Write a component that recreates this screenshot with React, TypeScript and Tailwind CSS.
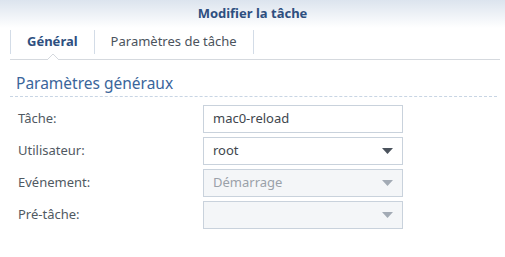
import React from "react";

interface Row {
  label: string;
  value: string;
  kind: "text" | "select" | "disabled";
}

const rows: Row[] = [
  { label: "Tâche:", value: "mac0-reload", kind: "text" },
  { label: "Utilisateur:", value: "root", kind: "select" },
  { label: "Evénement:", value: "Démarrage", kind: "disabled" },
  { label: "Pré-tâche:", value: "", kind: "disabled" },
];

function Caret({ dim }: { dim: boolean }) {
  return (
    <svg width="11" height="6" viewBox="0 0 11 6" className="shrink-0">
      <path d="M0 0h11L5.5 6z" fill={dim ? "#a3abb5" : "#4b535d"} />
    </svg>
  );
}

function Field({ row }: { row: Row }) {
  const disabled = row.kind === "disabled";
  return (
    <div
      className={
        disabled
          ? "h-[28px] w-[200px] border border-[#c9d2dc] bg-[#f4f6f8] flex items-center justify-between pl-[9px] pr-[9px] text-[13px] text-[#9aa1a9]"
          : "h-[28px] w-[200px] border border-[#c9d2dc] bg-white flex items-center justify-between pl-[9px] pr-[9px] text-[13px] text-[#40464d]"
      }
    >
      <span>{row.value}</span>
      {row.kind !== "text" && <Caret dim={disabled} />}
    </div>
  );
}

export default function App() {
  return (
    <div className="w-[505px] h-[257px] bg-white overflow-hidden font-['Noto_Sans',sans-serif]">
      <div className="h-[28px] bg-gradient-to-b from-[#dce4ee] to-white flex items-center justify-center text-[13px] font-bold text-[#2e4f80]">
        Modifier la tâche
      </div>

      <div className="relative ml-[10px] mr-[5px] h-[32px] pt-[2px] border-b border-[#d5d9de] flex items-start">
        <div className="h-[24px] border-l border-r border-[#d3dce7] px-[16px] flex items-center text-[13px] font-bold text-[#2e4f80]">
          Général
        </div>
        <div className="h-[24px] border-r border-[#d3dce7] px-[16px] flex items-center text-[13px] text-[#4b535c]">
          Paramètres de tâche
        </div>
        <svg
          width="12"
          height="7"
          viewBox="0 0 12 7"
          className="absolute left-[37px] bottom-[-1px]"
        >
          <path d="M0 7L6 1l6 6" fill="white" stroke="#d5d9de" strokeWidth="1" />
        </svg>
      </div>

      <div className="ml-[10px] mr-[8px] mt-[13px] pb-[3px] pl-[6px] border-b border-dashed border-[#c8d5e4] text-[15.5px] leading-[20px] text-[#3a659b]">
        Paramètres généraux
      </div>

      <div className="mt-[8px] flex flex-col gap-[4px]">
        {rows.map((row) => (
          <div key={row.label} className="flex items-center">
            <div className="w-[203px] pl-[18px] text-[13px] text-[#505962]">
              {row.label}
            </div>
            <Field row={row} />
          </div>
        ))}
      </div>
    </div>
  );
}
